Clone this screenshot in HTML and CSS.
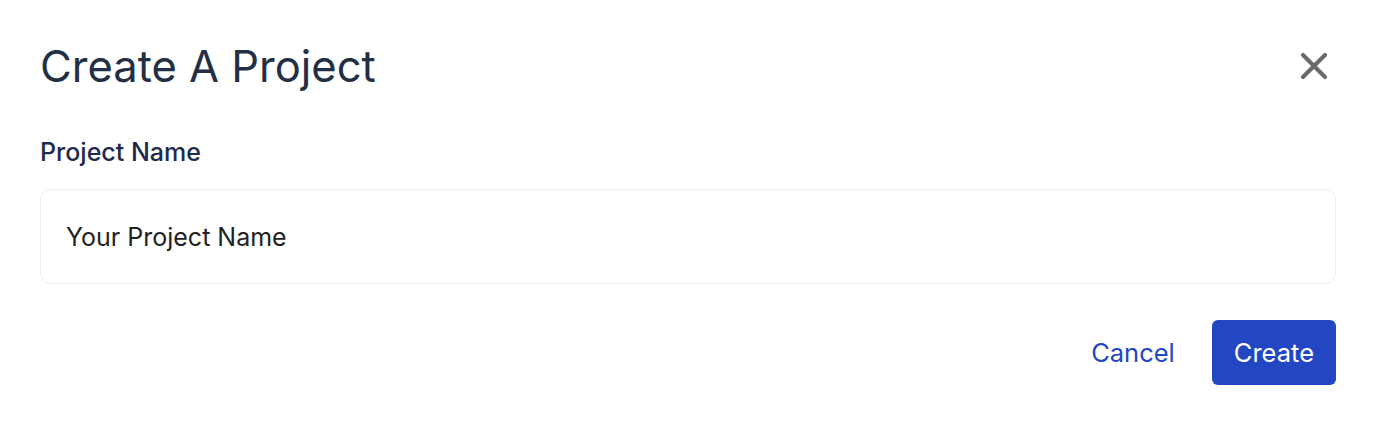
FILE: index.html
```html
<!DOCTYPE html>
<html lang="en">
<head>
  <meta charset="UTF-8">
  <meta name="viewport" content="width=device-width, initial-scale=1.0">
  <title>Create A Project</title>
  <link rel="stylesheet" href="styles.css">
</head>
<body>
  <div class="modal">
    <header class="modal-header">
      <h1>Create A Project</h1>
      <button class="close" type="button" aria-label="Close">
        <svg width="32" height="32" viewBox="0 0 32 32">
          <path d="M5 5 L27 27 M27 5 L5 27" stroke="#6b6b6b" stroke-width="4.2" stroke-linecap="round" fill="none"/>
        </svg>
      </button>
    </header>
    <form class="modal-form">
      <label for="project-name">Project Name</label>
      <input type="text" id="project-name" placeholder="Your Project Name">
      <div class="actions">
        <button type="button" class="btn-cancel">Cancel</button>
        <button type="button" class="btn-create">Create</button>
      </div>
    </form>
  </div>
</body>
</html>
```

FILE: styles.css
```css
body {
  margin: 0;
  font-family: Inter, "Noto Sans", sans-serif;
  background-color: #fff;
  color: #1e293b;
}
.modal {
  padding: 38px 40px 40px;
}
.modal-header {
  display: flex;
  justify-content: space-between;
  align-items: center;
}
.modal-header h1 {
  margin: 0;
  font-size: 43.5px;
  font-weight: 400;
  line-height: 56px;
  color: #222f44;
}
.close {
  background: none;
  border: none;
  padding: 0;
  margin-right: 6px;
  cursor: pointer;
  display: flex;
}
.modal-form {
  margin-top: 40px;
}
label {
  display: block;
  font-size: 25px;
  font-weight: 500;
  color: #1e2a4a;
  line-height: 36px;
}
input {
  display: block;
  box-sizing: border-box;
  width: 100%;
  height: 95px;
  margin-top: 19px;
  padding: 0 25px;
  font-family: inherit;
  font-size: 25px;
  border: 1px solid #eceef3;
  border-radius: 10px;
  outline: none;
}
input::placeholder {
  color: #222;
}
.actions {
  display: flex;
  justify-content: flex-end;
  align-items: center;
  gap: 37px;
  margin-top: 36px;
}
.actions button {
  font-family: inherit;
  font-size: 25.5px;
  cursor: pointer;
  border: none;
}
.btn-cancel {
  background: none;
  color: #2348c4;
  padding: 0;
}
.btn-create {
  background-color: #2347c2;
  color: #fff;
  height: 65px;
  padding: 0 22px;
  border-radius: 6px;
}
```
